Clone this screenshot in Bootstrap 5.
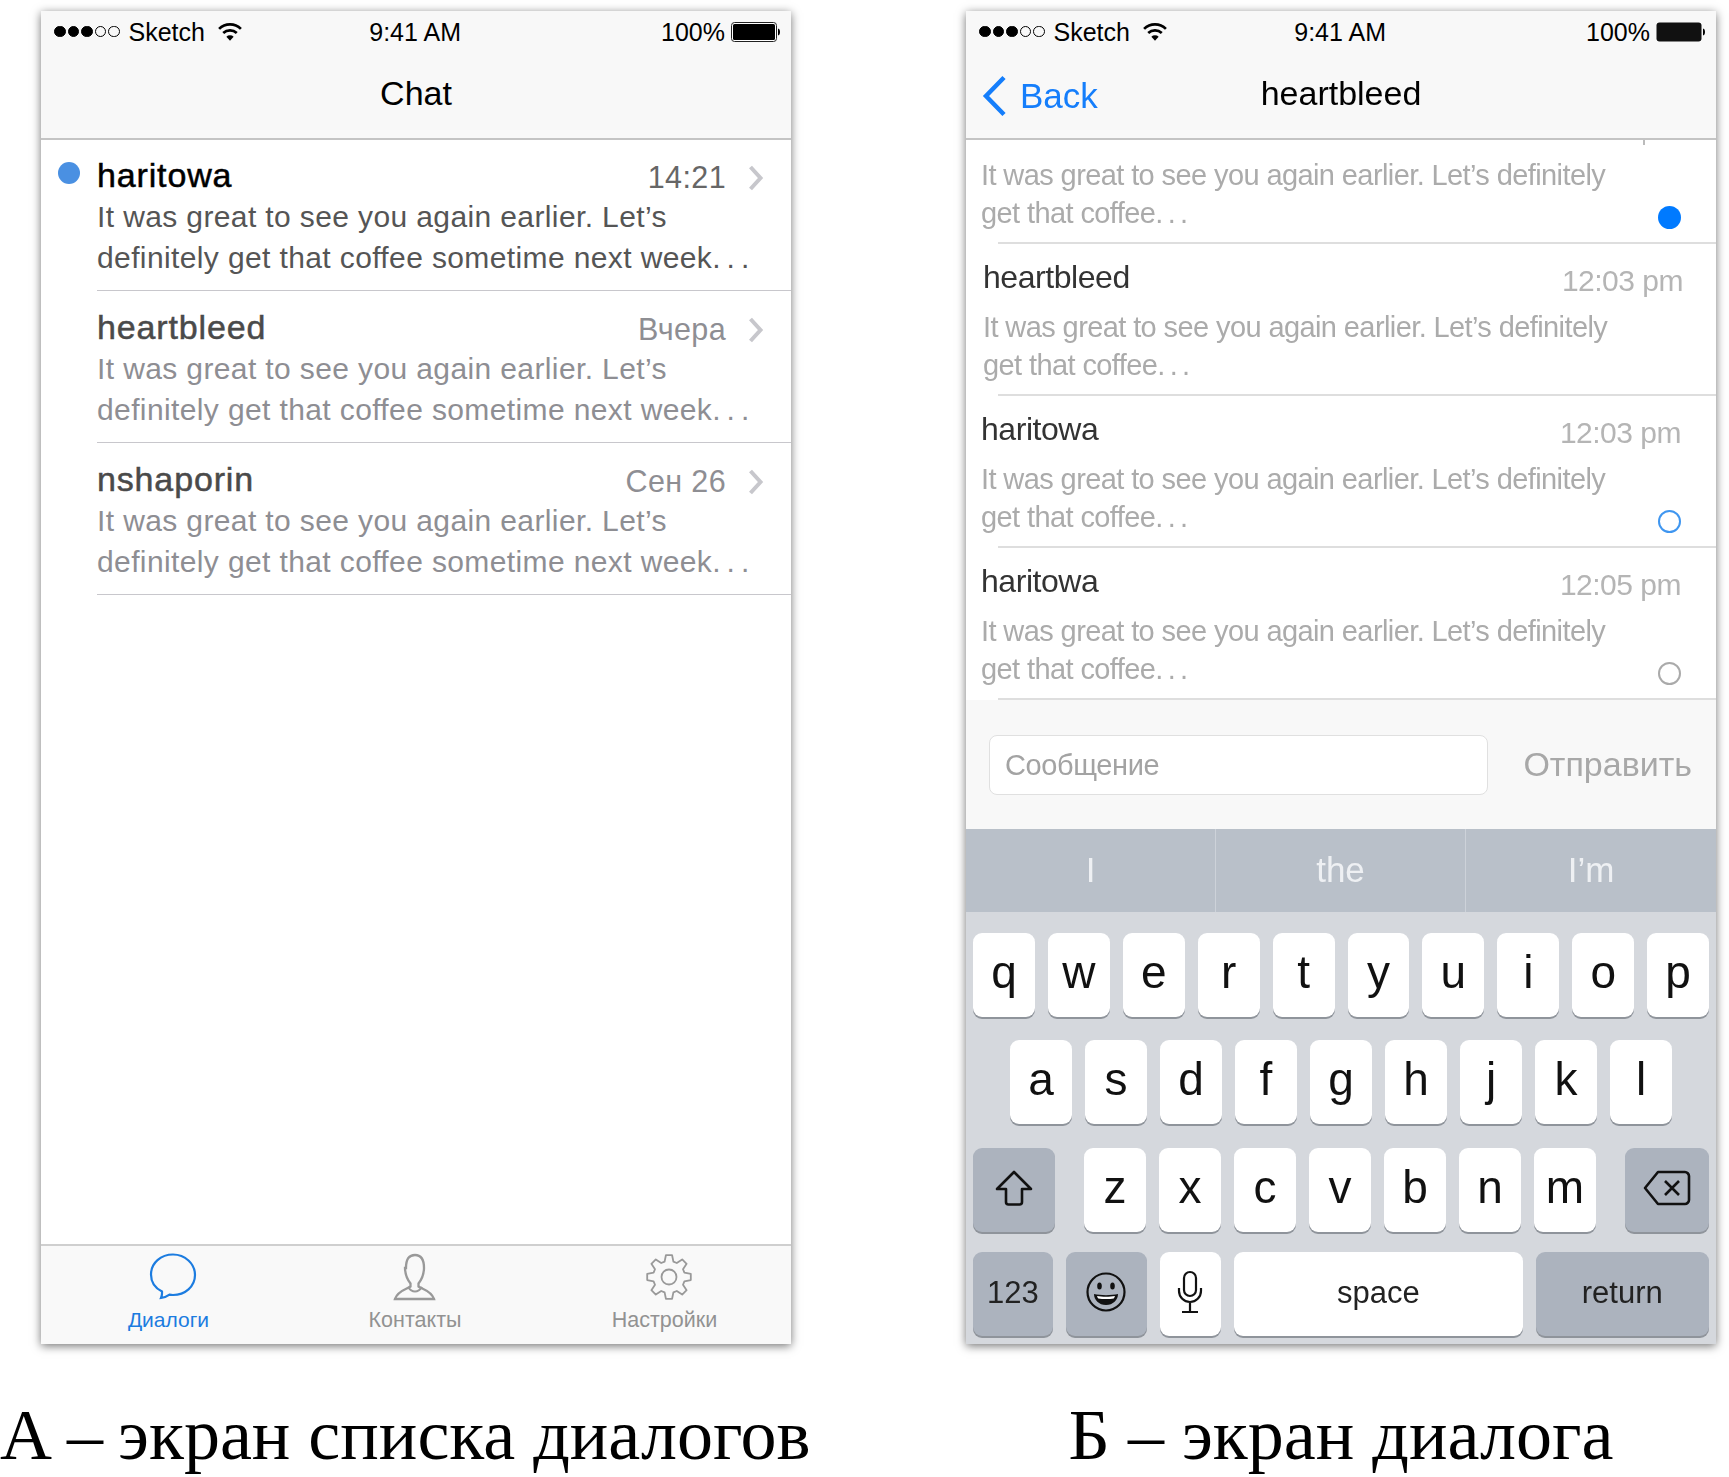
<!doctype html>
<html lang="ru"><head><meta charset="utf-8"><title>Экраны</title>
<link href="https://cdn.jsdelivr.net/npm/bootstrap@5.3.0/dist/css/bootstrap.min.css" rel="stylesheet">
<style>
body{background:#fff;font-family:"Liberation Sans",Arial,sans-serif;color:#000;overflow:hidden}
.sheet{padding:11px 0 0 41px;gap:175px}
.column{width:750px}
.phone{height:1333px;background:#fff;box-shadow:0 2px 9px rgba(0,0,0,.55)}
.soft{filter:blur(.55px)}
.status{height:40px;padding:1px 11px 0 13px;font-size:25px;line-height:36px;display:grid;grid-template-columns:1fr auto 1.012fr;align-items:center}
.barbg{background:#f8f8f8}
.navrow{height:89px;border-bottom:2px solid #c4c4c4;display:grid;grid-template-columns:1fr auto 1fr;align-items:center;font-size:34px;padding-bottom:3px}
.dots{gap:2px;margin-right:9px}
.dots i{width:11.5px;height:11.5px;border-radius:50%;border:1px solid #000;display:block}
.dots i.on{background:#000}
.wifi{margin-left:12px}
.pct{margin-right:6px}
.chatrow{height:152px;margin-left:56px;border-bottom:1px solid #c8c7cc;padding:17px 27px 0 0;position:relative;color:#8e8e93;font-size:30px;line-height:41px;letter-spacing:.38px}
.chatrow.first{color:#555;height:151px;padding-top:16px}
.nameline{line-height:38px;margin-bottom:0}
.who{font-size:34px;letter-spacing:.85px;-webkit-text-stroke:.5px currentColor;color:#4a4a4a}
.first .who{color:#000}
.when{margin-right:22px;color:#8e8e93;margin-top:2px;font-size:30.5px}
.first .when{color:#666}
.hook{margin-top:9px;display:block}
.unread{position:absolute;left:-39px;top:22px;width:22px;height:22px;border-radius:50%;background:#4a90e2}
.nowrap{white-space:nowrap}
.wideend{letter-spacing:6px}
.tabbar{height:100px;border-top:2px solid #cfcfcf;background:#f9f9f9;color:#929292;font-size:21.5px;line-height:26px}
.tabcell{padding-top:7px}
.tabcell svg{display:block;margin:0 auto 6px}
.tabon{color:#1c7ce0;padding-left:5px;font-size:21px}
.tabon svg{position:relative;left:4px}
.tabmid{padding-right:2px}
.tabend{padding-right:3px}
.tabend svg{position:relative;left:4px}
.back{color:#157efb;gap:13px;padding:6px 0 0 16px;font-size:35px}
.msg{height:152px;padding:12px 35px 0 15px;font-size:29px;line-height:38px;color:#ababab;letter-spacing:-.6px;position:relative}
.msg::after{content:"";position:absolute;left:32px;right:0;bottom:0;height:2px;background:#dedede}
.msg.top{height:104px;padding-top:16px}
.msg.shift{padding-left:17px;padding-right:33px}
.msgname{font-size:32px;color:#333;letter-spacing:-.45px;line-height:42px;margin-bottom:6px}
.msgtime{font-size:30px;color:#b5b5b5;letter-spacing:-.5px;margin-top:4px}
.trail{letter-spacing:4.3px}
.sign{width:23px;height:23px;border-radius:50%;position:absolute;right:35px;bottom:15px}
.sign.fill{background:#007aff}
.sign.ring{border:2.5px solid #3f96f0}
.sign.grey{border:2.5px solid #aaa}
.tick{position:absolute;left:677px;top:0;width:2px;height:5px;background:#bbb;z-index:1}
.compose{height:129px;padding:0 24px 0 23px;background:#f8f8f8;gap:35px}
.field{flex:1;height:60px;border:1px solid #e0e0e0;border-radius:8px;background:#fff;color:#a3a3a3;font-size:29px;line-height:58px;padding-left:15px;letter-spacing:-.4px}
.sendlink{font-size:34px;color:#a8a8a8}
.suggest{height:83px;background:#b9c0c9;color:#eef0f3;font-size:35px}
.suggest>div{width:250px;border-right:1px solid #cdd2d9}
.suggest>div:last-child{border:0}
.keyboard{background:#d5d8dd;padding:21px 7px 5px;height:432px;gap:23px}
.keyline{gap:13px;height:84px}
.rowthree{margin-top:1px}
.rowfour{margin-top:-3px}
.keycap{width:62px;height:84px;background:#fff;border-radius:9px;box-shadow:0 2px 0 #8f949b;font-size:46px;color:#111;padding-bottom:5px}
.keydark{background:#acb3be}
.w82{width:82px}.w84{width:84px}.w81{width:81px}.w289{width:289px}.w174{width:174px}.w80{width:80px}
.label31{font-size:31px;padding-bottom:2px;color:#222}
.caption{font-family:"Liberation Serif","Times New Roman",serif;font-size:72px;line-height:80px;margin-top:51px;white-space:nowrap}
.lead-in{word-spacing:-3px}
.cap-a{margin-left:-41px}
.cap-b{text-align:center}
</style></head><body>
<main class="sheet d-flex">
<section class="column flex-shrink-0">
<div class="phone d-flex flex-column">
<div class="barbg">
<div class="status">
<div class="d-flex align-items-center"><div class="dots d-flex"><i class="on"></i><i class="on"></i><i class="on"></i><i></i><i></i></div><span>Sketch</span>
<svg class="wifi" width="26" height="21" viewBox="0 0 25 20"><path d="M2 7.500a15 15 0 0 1 21 0M6 11.500a9.500 9.500 0 0 1 13 0" fill="none" stroke="#000" stroke-width="2.600"/><path d="M9 15a5 5 0 0 1 7 0l-3.500 4z"/></svg></div>
<div>9:41 AM</div>
<div class="d-flex align-items-center justify-content-end"><span class="pct">100%</span>
<svg width="49" height="20" viewBox="0 0 49 20"><rect x=".5" y=".5" width="45" height="19" rx="3" fill="#fff" stroke="#222"/><rect x="2" y="2" width="42" height="16" rx="1.500"/><path d="M47 6.500c1.300.3 2 1.500 2 3.500s-.7 3.200-2 3.500z"/></svg></div>
</div>
<div class="navrow"><div></div><div>Chat</div><div></div></div>
</div>
<div class="flex-grow-1">
<div class="chatrow first"><span class="unread"></span>
<div class="nameline d-flex justify-content-between"><span class="who">haritowa</span><div class="d-flex"><span class="when">14:21</span><svg class="hook" width="16" height="26" viewBox="0 0 16 26"><path d="M2.500 2l10 11-10 11" fill="none" stroke="#c7c7cc" stroke-width="4"/></svg></div></div>
<div class="nowrap">It was great to see you again earlier. Let’s<br>definitely get that coffee sometime next week<span class="wideend">...</span></div></div>
<div class="chatrow">
<div class="nameline d-flex justify-content-between"><span class="who">heartbleed</span><div class="d-flex"><span class="when">Вчера</span><svg class="hook" width="16" height="26" viewBox="0 0 16 26"><path d="M2.500 2l10 11-10 11" fill="none" stroke="#c7c7cc" stroke-width="4"/></svg></div></div>
<div class="nowrap">It was great to see you again earlier. Let’s<br>definitely get that coffee sometime next week<span class="wideend">...</span></div></div>
<div class="chatrow">
<div class="nameline d-flex justify-content-between"><span class="who">nshaporin</span><div class="d-flex"><span class="when">Сен 26</span><svg class="hook" width="16" height="26" viewBox="0 0 16 26"><path d="M2.500 2l10 11-10 11" fill="none" stroke="#c7c7cc" stroke-width="4"/></svg></div></div>
<div class="nowrap">It was great to see you again earlier. Let’s<br>definitely get that coffee sometime next week<span class="wideend">...</span></div></div>
</div>
<div class="tabbar row g-0 text-center">
<div class="col-4 tabcell tabon"><svg width="48" height="48" viewBox="0 0 48 48"><path d="M12 45c3.500-.3 6-1.500 8.500-3.300 1.200.2 2.200.3 3.500.3 12 0 22-8.500 22-20S36 1.500 24 1.500 2 10 2 21.500c0 7.500 4 13.500 11 17 .2 2.500-.2 4.800-1 6.500z" fill="none" stroke="currentColor" stroke-width="2.200"/></svg>Диалоги</div>
<div class="col-4 tabcell tabmid"><svg width="48" height="48" viewBox="0 0 48 48"><path d="M15 15c0-9 3-13 9-13s9 4 9 13c0 3-.7 6-1.700 9-1 2.500-2.300 4.500-3.800 6.500v3c3 2.500 12.500 4 15.500 12.500H4c3-8.500 12.500-10 15.500-12.500v-3c-1.500-2-2.800-4-3.800-6.500-1-3-1.700-6-1.700-9z" fill="none" stroke="#999" stroke-width="2.300"/><path d="M17 34c2 3 4.500 4.500 7 4.500s5-1.500 7-4.500" fill="none" stroke="#999" stroke-width="2"/></svg>Контакты</div>
<div class="col-4 tabcell tabend"><svg width="48" height="48" viewBox="0 0 48 48"><g transform="translate(24 24)" fill="none" stroke="#999" stroke-width="1.800" stroke-linejoin="round"><polygon points="-4.400,-15.400 -3.100,-21.800 3.100,-21.800 4.400,-15.400 7.780,-14 13.200,-17.600 17.600,-13.200 14,-7.780 15.400,-4.400 21.800,-3.100 21.800,3.100 15.400,4.400 14,7.780 17.600,13.200 13.200,17.600 7.780,14 4.400,15.400 3.100,21.800 -3.100,21.800 -4.400,15.400 -7.780,14 -13.200,17.600 -17.600,13.200 -14,7.780 -15.400,4.400 -21.800,3.100 -21.800,-3.100 -15.400,-4.400 -14,-7.780 -17.600,-13.200 -13.200,-17.600 -7.780,-14"/><circle r="7.500"/></g></svg>Настройки</div>
</div>
</div>
<div class="caption cap-a"><span class="lead-in">А – </span>экран списка диалогов</div>
</section>

<section class="column flex-shrink-0">
<div class="phone d-flex flex-column soft">
<div class="barbg">
<div class="status">
<div class="d-flex align-items-center"><div class="dots d-flex"><i class="on"></i><i class="on"></i><i class="on"></i><i></i><i></i></div><span>Sketch</span>
<svg class="wifi" width="26" height="21" viewBox="0 0 25 20"><path d="M2 7.500a15 15 0 0 1 21 0M6 11.500a9.500 9.500 0 0 1 13 0" fill="none" stroke="#000" stroke-width="2.600"/><path d="M9 15a5 5 0 0 1 7 0l-3.500 4z"/></svg></div>
<div>9:41 AM</div>
<div class="d-flex align-items-center justify-content-end"><span class="pct">100%</span>
<svg width="49" height="20" viewBox="0 0 49 20"><rect x=".5" y=".5" width="45" height="19" rx="3" fill="#111"/><path d="M47 6.500c1.300.3 2 1.500 2 3.500s-.7 3.200-2 3.500z"/></svg></div>
</div>
<div class="navrow">
<div class="back d-flex align-items-center"><svg width="25" height="42" viewBox="0 0 25 42"><path d="M22 2.500L4 21l18 18.500" fill="none" stroke="currentColor" stroke-width="4.500"/></svg><span>Back</span></div>
<div>heartbleed</div><div></div></div>
</div>
<div class="flex-grow-1 position-relative overflow-hidden">
<span class="tick"></span>
<div class="msg top"><div class="nowrap">It was great to see you again earlier. Let’s definitely<br>get that coffee<span class="trail">...</span></div><span class="sign fill"></span></div>
<div class="msg shift"><div class="msgname d-flex justify-content-between"><span>heartbleed</span><span class="msgtime">12:03 pm</span></div><div class="nowrap">It was great to see you again earlier. Let’s definitely<br>get that coffee<span class="trail">...</span></div></div>
<div class="msg"><div class="msgname d-flex justify-content-between"><span>haritowa</span><span class="msgtime">12:03 pm</span></div><div class="nowrap">It was great to see you again earlier. Let’s definitely<br>get that coffee<span class="trail">...</span></div><span class="sign ring"></span></div>
<div class="msg"><div class="msgname d-flex justify-content-between"><span>haritowa</span><span class="msgtime">12:05 pm</span></div><div class="nowrap">It was great to see you again earlier. Let’s definitely<br>get that coffee<span class="trail">...</span></div><span class="sign grey"></span></div>
</div>
<div class="compose d-flex align-items-center flex-shrink-0"><div class="field">Сообщение</div><div class="sendlink">Отправить</div></div>
<div class="suggest d-flex flex-shrink-0 text-center"><div class="d-flex align-items-center justify-content-center">I</div><div class="d-flex align-items-center justify-content-center">the</div><div class="d-flex align-items-center justify-content-center">I’m</div></div>
<div class="keyboard d-flex flex-column flex-shrink-0">
<div class="keyline d-flex justify-content-center"><div class="keycap d-flex align-items-center justify-content-center">q</div><div class="keycap d-flex align-items-center justify-content-center">w</div><div class="keycap d-flex align-items-center justify-content-center">e</div><div class="keycap d-flex align-items-center justify-content-center">r</div><div class="keycap d-flex align-items-center justify-content-center">t</div><div class="keycap d-flex align-items-center justify-content-center">y</div><div class="keycap d-flex align-items-center justify-content-center">u</div><div class="keycap d-flex align-items-center justify-content-center">i</div><div class="keycap d-flex align-items-center justify-content-center">o</div><div class="keycap d-flex align-items-center justify-content-center">p</div></div>
<div class="keyline d-flex justify-content-center"><div class="keycap d-flex align-items-center justify-content-center">a</div><div class="keycap d-flex align-items-center justify-content-center">s</div><div class="keycap d-flex align-items-center justify-content-center">d</div><div class="keycap d-flex align-items-center justify-content-center">f</div><div class="keycap d-flex align-items-center justify-content-center">g</div><div class="keycap d-flex align-items-center justify-content-center">h</div><div class="keycap d-flex align-items-center justify-content-center">j</div><div class="keycap d-flex align-items-center justify-content-center">k</div><div class="keycap d-flex align-items-center justify-content-center">l</div></div>
<div class="keyline rowthree d-flex justify-content-between">
<div class="keycap keydark w82 d-flex align-items-center justify-content-center"><svg width="40" height="38" viewBox="0 0 40 38"><path d="M20 3L3 20h9v13c0 1.500 1 2.500 2.500 2.500h11c1.500 0 2.500-1 2.500-2.500V20h9z" fill="none" stroke="#111" stroke-width="2.600" stroke-linejoin="round"/></svg></div>
<div class="keyline d-flex"><div class="keycap d-flex align-items-center justify-content-center">z</div><div class="keycap d-flex align-items-center justify-content-center">x</div><div class="keycap d-flex align-items-center justify-content-center">c</div><div class="keycap d-flex align-items-center justify-content-center">v</div><div class="keycap d-flex align-items-center justify-content-center">b</div><div class="keycap d-flex align-items-center justify-content-center">n</div><div class="keycap d-flex align-items-center justify-content-center">m</div></div>
<div class="keycap keydark w84 d-flex align-items-center justify-content-center"><svg width="48" height="36" viewBox="0 0 48 36"><path d="M15 2h27c2 0 4 2 4 4v24c0 2-2 4-4 4H15L2 18z" fill="none" stroke="#111" stroke-width="2.600" stroke-linejoin="round"/><path d="M22 11l14 14M36 11L22 25" stroke="#111" stroke-width="2.600"/></svg></div>
</div>
<div class="keyline rowfour d-flex">
<div class="keycap keydark w80 label31 d-flex align-items-center justify-content-center">123</div>
<div class="keycap keydark w81 d-flex align-items-center justify-content-center"><svg width="42" height="42" viewBox="0 0 42 42"><circle cx="21" cy="21" r="18.500" fill="none" stroke="#111" stroke-width="2.200"/><ellipse cx="14.500" cy="15" rx="2.300" ry="3.500" fill="#111"/><ellipse cx="27.500" cy="15" rx="2.300" ry="3.500" fill="#111"/><path d="M9 23c6 1.500 18 1.500 24 0 0 6-5 11-12 11S9 29 9 23z" fill="#111"/><path d="M12 25c5 1 13 1 18 0-.4 1-.8 2-1.300 2.500-4 .7-11 .7-15.400 0-.5-.5-1-1.500-1.300-2.500z" fill="#fff"/></svg></div>
<div class="keycap d-flex align-items-center justify-content-center"><svg width="28" height="44" viewBox="0 0 28 44"><rect x="8" y="2" width="12" height="24" rx="6" fill="none" stroke="#111" stroke-width="2.200"/><path d="M3 18v3c0 6 5 11 11 11s11-5 11-11v-3M14 32v9M6 42h16" fill="none" stroke="#111" stroke-width="2.200"/></svg></div>
<div class="keycap w289 label31 d-flex align-items-center justify-content-center">space</div>
<div class="keycap keydark w174 label31 d-flex align-items-center justify-content-center">return</div>
</div>
</div>
</div>
<div class="caption cap-b">Б – экран диалога</div>
</section>
</main>
</body></html>
